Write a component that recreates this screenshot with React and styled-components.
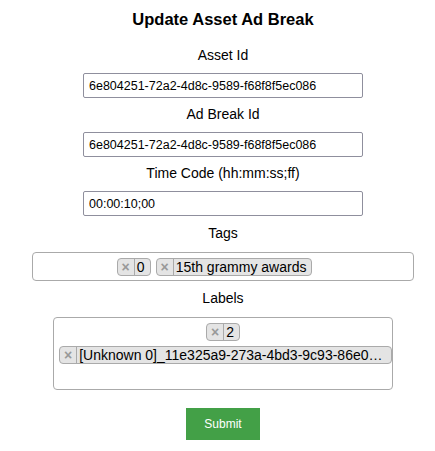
import React from 'react';
import styled, { createGlobalStyle } from 'styled-components';

const GlobalStyle = createGlobalStyle`
  body {
    margin: 0;
    background: #fff;
    font-family: "Liberation Sans", Arial, sans-serif;
    color: #000;
  }
`;

const Form = styled.form`
  display: flex;
  flex-direction: column;
  align-items: center;
  padding-left: 11px;
`;

const Title = styled.h3`
  margin: 9px 0 10px;
  font-size: 16.5px;
  line-height: 20px;
  font-weight: bold;
`;

// labels above the tag boxes sit a touch lower than the ones above inputs
const Label = styled.label`
  display: block;
  margin: ${(props) => (props.spaced ? '9px 0 11px' : '8px 0 10px')};
  font-size: 14px;
  line-height: 16px;
  text-align: center;
`;

const TextInput = styled.input`
  box-sizing: border-box;
  width: 280px;
  height: 25px;
  padding: 0 5px;
  border: 1px solid #8f8f9d;
  border-radius: 2px;
  font-family: "Liberation Sans", Arial, sans-serif;
  font-size: 12.5px;
  color: #000;
  outline: none;
`;

const TagBox = styled.div`
  box-sizing: border-box;
  width: ${(props) => props.width}px;
  display: flex;
  flex-wrap: wrap;
  justify-content: safe center;
  align-items: flex-start;
  padding: 0 5px 4px 0;
  border: 1px solid #aaa;
  border-radius: 4px;
  background: #fff;
`;

const Chip = styled.div`
  box-sizing: border-box;
  display: flex;
  max-width: 100%;
  height: 18px;
  margin: 5px 0 0 5px;
  border: 1px solid #aaa;
  border-radius: 4px;
  background: #e4e4e4;
  font-size: 14px;
  line-height: 16px;
  color: #000;
`;

const Remove = styled.span`
  flex: none;
  padding: 0 4px;
  border-right: 1px solid #aaa;
  color: #999;
  font-weight: bold;
  cursor: pointer;
`;

const ChipText = styled.span`
  min-width: 0;
  padding: 0 5px 0 2px;
  white-space: nowrap;
  overflow: hidden;
  text-overflow: ellipsis;
`;

const Search = styled.input`
  box-sizing: border-box;
  width: 12px;
  height: 16px;
  margin: 5px 0 0 5px;
  padding: 0;
  border: none;
  background: transparent;
  font-size: 14px;
  outline: none;
`;

const SubmitButton = styled.button`
  width: 74px;
  height: 32px;
  margin-top: 18px;
  border: none;
  background: #43a047;
  color: #fff;
  font-family: "Liberation Sans", Arial, sans-serif;
  font-size: 12px;
  cursor: pointer;
`;

const TagChip = ({ text }) => (
  <Chip>
    <Remove>×</Remove>
    <ChipText>{text}</ChipText>
  </Chip>
);

const tags = ['0', '15th grammy awards'];
const labels = ['2', '[Unknown 0]_11e325a9-273a-4bd3-9c93-86e0a4f1c2d7'];

const App = () => (
  <>
    <GlobalStyle />
    <Form onSubmit={(e) => e.preventDefault()}>
      <Title>Update Asset Ad Break</Title>

      <Label>Asset Id</Label>
      <TextInput defaultValue="6e804251-72a2-4d8c-9589-f68f8f5ec086" />

      <Label>Ad Break Id</Label>
      <TextInput defaultValue="6e804251-72a2-4d8c-9589-f68f8f5ec086" />

      <Label>Time Code (hh:mm:ss;ff)</Label>
      <TextInput defaultValue="00:00:10;00" />

      <Label spaced>Tags</Label>
      <TagBox width={382}>
        {tags.map((t) => (
          <TagChip key={t} text={t} />
        ))}
        <Search />
      </TagBox>

      <Label spaced>Labels</Label>
      <TagBox width={340}>
        {labels.map((t) => (
          <TagChip key={t} text={t} />
        ))}
        <Search />
      </TagBox>

      <SubmitButton type="submit">Submit</SubmitButton>
    </Form>
  </>
);

export default App;
